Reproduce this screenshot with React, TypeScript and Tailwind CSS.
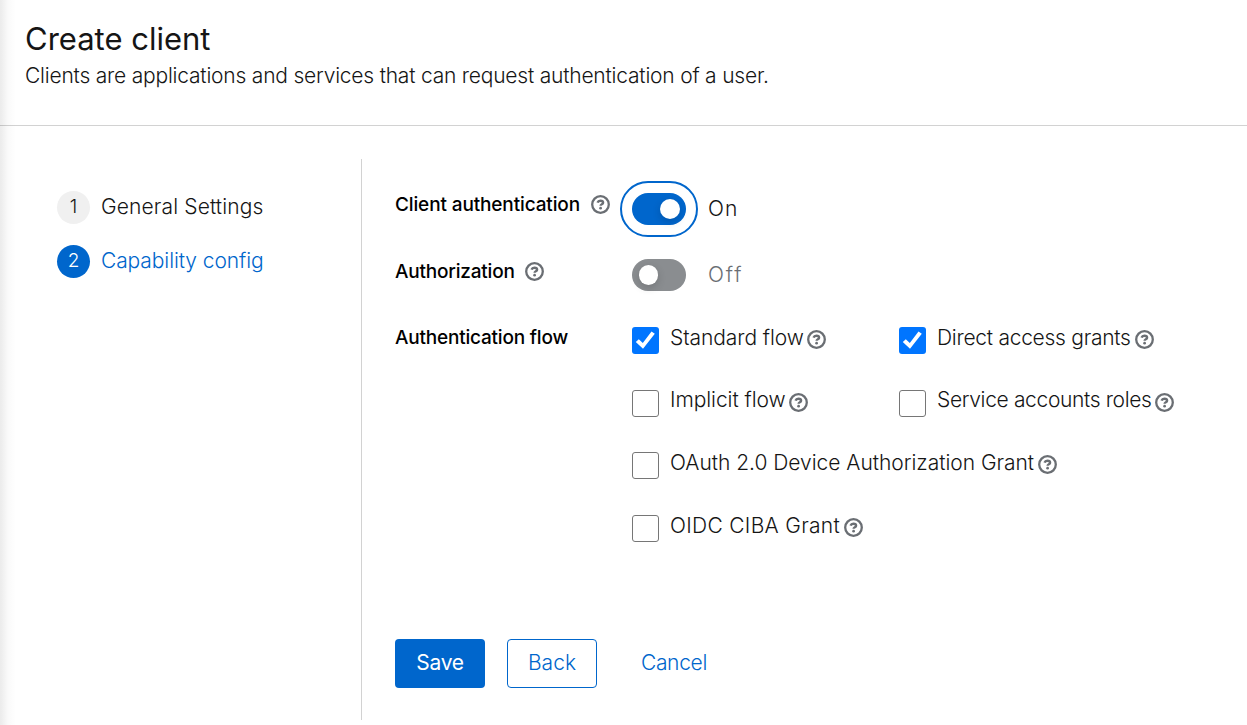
import { useState } from "react";

function HelpIcon({ className = "" }: { className?: string }) {
  return (
    <svg viewBox="0 0 19 19" className={`h-[19px] w-[19px] shrink-0 text-[#6a6e73] ${className}`} fill="none" stroke="currentColor" aria-hidden="true">
      <circle cx="9.5" cy="9.5" r="8.3" strokeWidth="2.3" />
      <path d="M6.5 7.6C7 6.3 8.1 5.7 9.4 5.7c1.6 0 2.7.8 2.7 2 0 1.6-2.5 1.5-2.5 3.1" strokeWidth="2.4" />
      <circle cx="9.6" cy="13.2" r="1.35" fill="currentColor" stroke="none" />
    </svg>
  );
}

function Toggle({ on, focused = false, onToggle }: { on: boolean; focused?: boolean; onToggle: () => void }) {
  return (
    <button
      type="button"
      role="switch"
      aria-checked={on}
      onClick={onToggle}
      className={`relative flex h-8 w-[54px] shrink-0 items-center rounded-full outline-none ${on ? "justify-end bg-[#0066cc] pr-[6.5px]" : "justify-start bg-[#8a8d90] pl-[6.5px]"}`}
    >
      {focused && <span className="absolute -inset-3 rounded-full border-2 border-[#0066cc]" />}
      <span className="h-[19.5px] w-[19.5px] rounded-full bg-white shadow-[0_3px_8px_rgba(3,3,3,0.16)]" />
    </button>
  );
}

interface Flow {
  label: string;
  text: string;
  wide?: boolean;
  checked?: boolean;
}

const flows: Flow[] = [
  { label: "Standard flow", text: "w-[138px] tracking-[-0.08px]", checked: true },
  { label: "Direct access grants", text: "w-[199px] tracking-[-0.27px]", checked: true },
  { label: "Implicit flow", text: "w-[120px] tracking-[-0.07px]" },
  { label: "Service accounts roles", text: "w-[219px] tracking-[-0.35px]" },
  { label: "OAuth 2.0 Device Authorization Grant", text: "w-[369px] tracking-[-0.03px]", wide: true },
  { label: "OIDC CIBA Grant", text: "w-[175px] tracking-[0.3px]", wide: true },
];

function FlowOption({ flow }: { flow: Flow }) {
  const [checked, setChecked] = useState(!!flow.checked);
  return (
    <div className={`flex h-[27px] items-start ${flow.wide ? "col-span-2" : ""}`}>
      <button
        type="button"
        role="checkbox"
        aria-checked={checked}
        aria-label={flow.label}
        onClick={() => setChecked(!checked)}
        className={`h-[27px] w-[27px] shrink-0 rounded-[3px] ${checked ? "bg-[#0075ff]" : "border-[1.5px] border-[#767676] bg-white"}`}
      >
        {checked && (
          <svg viewBox="0 0 27 27" className="h-[27px] w-[27px]" fill="#fff">
            <path d="M3.8 15 6.8 12.2 10.8 15.9 19.5 4.4 22.8 6.8 11 21.8Z" />
          </svg>
        )}
      </button>
      <span className={`-mt-[5.3px] ml-[11px] shrink-0 leading-8 whitespace-nowrap ${flow.text}`}>{flow.label}</span>
      <HelpIcon className="mt-[3px] -ml-px" />
    </div>
  );
}

export default function App() {
  const [auth, setAuth] = useState(true);
  const [authorization, setAuthorization] = useState(false);

  return (
    <div className="relative flex h-[725px] w-[1247px] flex-col overflow-hidden bg-white font-['Inter',sans-serif] text-[21px] font-light text-[#151515]">
      <header className="h-[126px] shrink-0 border-b border-[#d2d2d2] pt-[19px] pl-[25px]">
        <h1 className="text-[31px] leading-10 font-normal">Create client</h1>
        <p className="mt-px leading-8 tracking-[-0.21px]">Clients are applications and services that can request authentication of a user.</p>
      </header>

      <div className="mt-[33px] flex h-[561px]">
        <nav className="w-[362px] border-r border-[#d2d2d2] pt-8 pl-[57px]">
          <ol className="flex flex-col gap-[21px]">
            <li className="flex h-[33px] items-center">
              <span className="flex h-[33px] w-[33px] items-center justify-center rounded-full bg-[#f0f0f0] pb-px text-[19px]">1</span>
              <span className="ml-[11px] pb-px tracking-[0.13px]">General Settings</span>
            </li>
            <li className="flex h-[33px] items-center">
              <span className="flex h-[33px] w-[33px] items-center justify-center rounded-full bg-[#0066cc] pb-px text-[19px] text-white">2</span>
              <span className="ml-[11px] pb-px tracking-[-0.1px] text-[#0066cc]">Capability config</span>
            </li>
          </ol>
        </nav>

        <main className="pt-[34px] pl-[33px]">
          <div className="flex h-8 items-center">
            <div className="flex w-[237px] items-center pb-[9px]">
              <span className="w-[196px] pt-[2px] text-[19px] font-medium tracking-[-0.13px] whitespace-nowrap text-black">Client authentication</span>
              <HelpIcon />
            </div>
            <Toggle on={auth} focused onToggle={() => setAuth(!auth)} />
            <span className="ml-[22px] pb-px tracking-[1px]">{auth ? "On" : "Off"}</span>
          </div>

          <div className="mt-[34px] flex h-8 items-center">
            <div className="flex w-[237px] items-center pb-[7px]">
              <span className="w-[130px] pt-[2px] text-[19px] font-medium tracking-[-0.2px] whitespace-nowrap text-black">Authorization</span>
              <HelpIcon />
            </div>
            <Toggle on={authorization} onToggle={() => setAuthorization(!authorization)} />
            <span className="ml-[22px] pb-px tracking-[1.8px] text-[#6a6e73]">{authorization ? "On" : "Off"}</span>
          </div>

          <div className="mt-9 flex">
            <div className="w-[237px] text-[19px] leading-[21px] font-medium tracking-[-0.2px] text-black">Authentication flow</div>
            <div className="grid grid-cols-[267px_auto] gap-y-[35.7px]">
              {flows.map((flow) => (
                <FlowOption key={flow.label} flow={flow} />
              ))}
            </div>
          </div>

          <div className="mt-[97px] flex">
            <button className="h-[49px] w-[90px] rounded-[4px] bg-[#0066cc] pb-px font-normal tracking-[-0.3px] text-white">Save</button>
            <button className="ml-[22px] h-[49px] w-[90px] rounded-[4px] border border-[#0066cc] pb-px text-[#0066cc]">Back</button>
            <button className="ml-[22px] h-[49px] w-[110px] pb-px tracking-[-0.3px] text-[#0066cc]">Cancel</button>
          </div>
        </main>
      </div>

      <div className="pointer-events-none absolute inset-y-0 left-0 w-4 bg-linear-to-r from-black/8 via-black/2 to-transparent" />
    </div>
  );
}
